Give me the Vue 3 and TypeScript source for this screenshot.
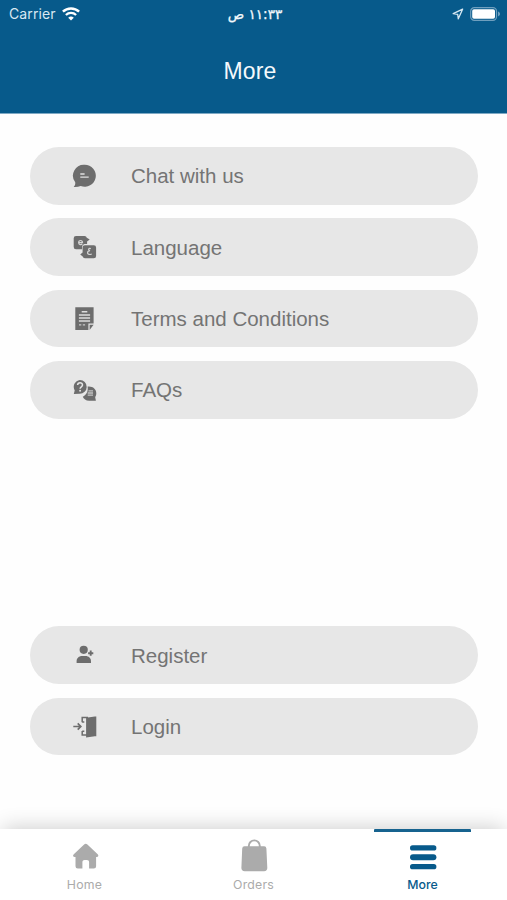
<script setup lang="ts">
import { ref } from 'vue'

type IconName = 'chat' | 'language' | 'terms' | 'faq' | 'register' | 'login'
type TabName = 'home' | 'orders' | 'more'

interface MenuItem {
  icon: IconName
  label: string
}

const groups: MenuItem[][] = [
  [
    { icon: 'chat', label: 'Chat with us' },
    { icon: 'language', label: 'Language' },
    { icon: 'terms', label: 'Terms and Conditions' },
    { icon: 'faq', label: 'FAQs' },
  ],
  [
    { icon: 'register', label: 'Register' },
    { icon: 'login', label: 'Login' },
  ],
]

const tabs: { id: TabName; label: string }[] = [
  { id: 'home', label: 'Home' },
  { id: 'orders', label: 'Orders' },
  { id: 'more', label: 'More' },
]

const active = ref<TabName>('more')
</script>

<template>
  <div class="screen">
    <header class="header">
      <div class="status">
        <div class="status-left">
          <span class="carrier">Carrier</span>
          <svg class="wifi" width="18" height="14" viewBox="0 0 18 14" fill="none">
            <path d="M.9 4.600a11.800 11.800 0 0 1 16.200 0" stroke="#fff" stroke-width="2.500" />
            <path d="M3.900 8a7.400 7.400 0 0 1 10.200 0" stroke="#fff" stroke-width="2.300" />
            <path d="M9 13.600 6.200 10.700a4.100 4.100 0 0 1 5.600 0z" fill="#fff" />
          </svg>
        </div>
        <span class="time" dir="rtl">١١:٣٣ ص</span>
        <div class="status-right">
          <svg width="12" height="12" viewBox="0 0 12 12" fill="none">
            <path d="M10.600 1.200 1.200 5.700l4.500.6.6 4.500z" stroke="#d5e7f2" stroke-width="1.300" stroke-linejoin="round" />
          </svg>
          <svg width="31" height="14" viewBox="0 0 31 14" fill="none">
            <rect x=".7" y=".7" width="25.800" height="12.600" rx="3.600" stroke="#6f9fbe" stroke-width="1.200" />
            <rect x="2.200" y="2.200" width="22.800" height="9.600" rx="1.800" fill="#fff" />
            <path d="M28 4.600c1.600.7 2 1.500 2 2.400s-.4 1.700-2 2.400z" fill="#6f9fbe" />
          </svg>
        </div>
      </div>
      <h1 class="title">More</h1>
    </header>

    <main class="content">
      <nav v-for="(group, g) in groups" :key="g" class="group">
        <button v-for="item in group" :key="item.icon" class="pill" type="button">
          <svg class="icon" width="26" height="26" viewBox="0 0 26 26">
            <template v-if="item.icon === 'chat'">
              <path d="M12.700 1.700a11 11 0 1 1-4 21.200c-2 .9-4.400 1.300-7 1.100 1.300-1.400 1.800-2.900 1.500-4.700A11 11 0 0 1 12.700 1.700z" fill="#6d6d6d" />
              <path d="M8.300 11h4.300M8.300 14.100h8.400" stroke="#e0e0e0" stroke-width="1.300" />
            </template>
            <template v-else-if="item.icon === 'language'">
              <path d="M4 2h8.600a2.400 2.400 0 0 1 2.200 1.800l2.900 1.700-2.600 2V10h-2.600a3 3 0 0 0-2.400 3v2.200H4a2.300 2.300 0 0 1-2.300-2.300V4.300A2.300 2.300 0 0 1 4 2z" fill="#6d6d6d" />
              <path d="M12.900 11.300h8.900a2.300 2.300 0 0 1 2.300 2.300v8.300a2.300 2.300 0 0 1-2.300 2.300h-8.900a2.300 2.300 0 0 1-2.200-1.800l-2.500-2 2.400-1.900v-4.900a2.300 2.300 0 0 1 2.300-2.300z" fill="#6d6d6d" />
              <path d="M6.600 8.600h3.900c0-2.800-3.900-2.800-3.900 0 0 2.400 2.700 2.400 3.700 1.400" stroke="#d4d4d4" stroke-width="1.200" fill="none" />
              <path d="M18.800 14.600c-2.400-.7-3 1.600-.8 2-3.400.6-3.200 4.100.2 3.900l1.500-.3" stroke="#d4d4d4" stroke-width="1.200" fill="none" />
            </template>
            <template v-else-if="item.icon === 'terms'">
              <path d="M3.300 1.200h18.300v16.400h-5.200V24H3.300z" fill="#6d6d6d" />
              <path d="M17.600 24v-5.200h4z" fill="#6d6d6d" />
              <path d="M9.700 5.700h5.600M6.900 9h11.200M6.900 12h11.200M6.900 15h11.200" stroke="#dcdcdc" stroke-width="1.500" />
              <path d="M7 18.800h2.300M10.800 18.800h2.300" stroke="#c9c9c9" stroke-width="1.200" />
            </template>
            <template v-else-if="item.icon === 'faq'">
              <path d="M15.600 9.600c4.900-.7 8.700 2.300 8.700 6.700 0 1.700-.5 2.900-1.100 3.900l.7 3.500h-6.600c-3.500 0-5.700-1.700-6.500-4 3.500-1.500 5.600-5.300 4.800-10.100z" fill="#6d6d6d" />
              <path d="M7.900 3a6.900 6.900 0 1 1-.2 13.800l-5.900.2.900-3.600A6.900 6.900 0 0 1 7.900 3z" fill="#6d6d6d" />
              <path d="M5.600 8.100c.1-3.100 5-3.100 4.900 0 0 1.800-2.400 1.800-2.400 3.600" stroke="#e5e5e5" stroke-width="1.500" fill="none" />
              <circle cx="8.100" cy="13.800" r=".95" fill="#e5e5e5" />
              <path d="M16.500 13.900h4.500M15.700 16h5.300M15.700 18.100h5.300" stroke="#c4c4c4" stroke-width="1.400" />
            </template>
            <template v-else-if="item.icon === 'register'">
              <circle cx="11.700" cy="7.800" r="4.100" fill="#6d6d6d" />
              <path d="M4.600 20.900v-1.700c0-3 2.400-5.200 5.400-5.200h3.600c3 0 5.400 2.200 5.400 5.200v1.700z" fill="#6d6d6d" />
              <path d="M18.700 8.600v5.200M16.100 11.200h5.200" stroke="#6d6d6d" stroke-width="1.900" />
            </template>
            <template v-else>
              <path d="M10.200 8.300V3.400H16M10.200 17v4.100H16" stroke="#6d6d6d" stroke-width="1.500" fill="none" />
              <path d="m14.100 3.700 8.700-1.300h1.500v19.800h-1.500l-8.700 1.300z" fill="#6d6d6d" />
              <path d="M10.200 8h2.100M10.200 17.200h2.100" stroke="#6d6d6d" stroke-width="1.500" />
              <path d="M1.300 12.500h7M5.700 9.400l3.100 3.100-3.100 3.100" stroke="#6d6d6d" stroke-width="1.700" fill="none" />
            </template>
          </svg>
          <span class="pill-label">{{ item.label }}</span>
        </button>
      </nav>
    </main>

    <footer class="tabbar">
      <button
        v-for="tab in tabs"
        :key="tab.id"
        type="button"
        class="tab"
        :class="{ active: active === tab.id }"
        @click="active = tab.id"
      >
        <svg class="tab-icon" width="34" height="34" viewBox="0 0 34 34" fill="currentColor">
          <path
            v-if="tab.id === 'home'"
            d="M16.100 5.500a2.500 2.500 0 0 1 3.300 0l10.300 9.700c1.200 1.200.7 2.700-.9 2.700h-.7v9.300a2.300 2.300 0 0 1-2.300 2.300h-4.700v-6.300c0-1.400-.9-2.300-2.200-2.300h-2.300c-1.300 0-2.200.9-2.200 2.300v6.300H9.800a2.300 2.300 0 0 1-2.300-2.300v-9.300h-.8c-1.700 0-2.200-1.500-.9-2.700z"
          />
          <template v-else-if="tab.id === 'orders'">
            <path d="M11.800 8.500V6.900a5.500 5.500 0 0 1 11 0v1.600" fill="none" stroke="currentColor" stroke-width="1.900" />
            <path d="M7.500 7.300h19.600a2.300 2.300 0 0 1 2.300 2.100l.9 19.300a3.300 3.300 0 0 1-3.300 3.500H7.700a3.300 3.300 0 0 1-3.300-3.500l.8-19.300a2.300 2.300 0 0 1 2.300-2.100z" />
          </template>
          <template v-else>
            <rect x="4" y="6.300" width="26.400" height="5.300" rx="2.600" />
            <rect x="4" y="15.200" width="26.400" height="6" rx="3" />
            <rect x="4" y="25" width="26.400" height="5.300" rx="2.600" />
          </template>
        </svg>
        <span class="tab-label">{{ tab.label }}</span>
      </button>
    </footer>
  </div>
</template>

<style>
body {
  margin: 0;
  background: #fff;
}
</style>

<style scoped>
.screen {
  display: flex;
  flex-direction: column;
  width: 507px;
  height: 900px;
  overflow: hidden;
  background: #fefefe;
  font-family: "Liberation Sans", Arial, sans-serif;
}

button {
  margin: 0;
  padding: 0;
  border: 0;
  background: none;
  font: inherit;
}

.header {
  flex: none;
  box-sizing: border-box;
  height: 114px;
  border-bottom: 1px solid #7ea9c4;
  background: #075a8b;
  color: #f4f9fc;
}

.status {
  display: grid;
  grid-template-columns: 1fr auto 1fr;
  align-items: center;
  height: 27px;
  padding: 0 6px 0 9px;
}

.status-left,
.status-right {
  display: flex;
  align-items: center;
  gap: 6px;
}

.status-right {
  justify-content: flex-end;
}

.carrier {
  color: #d9e8f2;
  font-family: Inter, sans-serif;
  font-size: 14px;
  letter-spacing: 0.1px;
}

.time {
  font-family: "DejaVu Sans", sans-serif;
  font-size: 13.600px;
  line-height: 20px;
  -webkit-text-stroke: 0.300px currentColor;
}

.title {
  margin: 30px 0 0;
  padding-right: 7px;
  font-size: 23px;
  font-weight: 400;
  line-height: 28px;
  letter-spacing: 0.200px;
  text-align: center;
}

.content {
  flex: 1;
  display: flex;
  flex-direction: column;
  justify-content: space-between;
  padding: 33px 29px 73.600px 30px;
}

.group {
  display: flex;
  flex-direction: column;
  gap: 13.700px;
}

.pill {
  display: flex;
  align-items: center;
  gap: 33px;
  height: 57.700px;
  padding-left: 42px;
  border-radius: 29px;
  background: #e7e7e7;
  color: #747474;
  font-size: 20.500px;
}

.pill-label {
  padding-top: 1px;
}

.icon {
  flex: none;
}

.tabbar {
  flex: none;
  display: grid;
  grid-template-columns: repeat(3, 1fr);
  height: 71px;
  background: #fff;
  box-shadow: 0 -4px 20px -3px rgba(0, 0, 0, 0.2);
}

.tab {
  display: flex;
  flex-direction: column;
  align-items: center;
  justify-self: center;
  width: 97px;
  padding-top: 7px;
  border-top: 3px solid transparent;
  border-radius: 1px;
  color: #ababab;
}

.tab.active {
  border-top-color: #17638f;
  color: #075a8b;
}

.tab-label {
  margin-top: 4px;
  font-family: Inter, sans-serif;
  font-size: 12.300px;
  line-height: 16px;
  letter-spacing: 0.200px;
}

.tab.active .tab-label {
  font-weight: 500;
  letter-spacing: 0;
}
</style>
